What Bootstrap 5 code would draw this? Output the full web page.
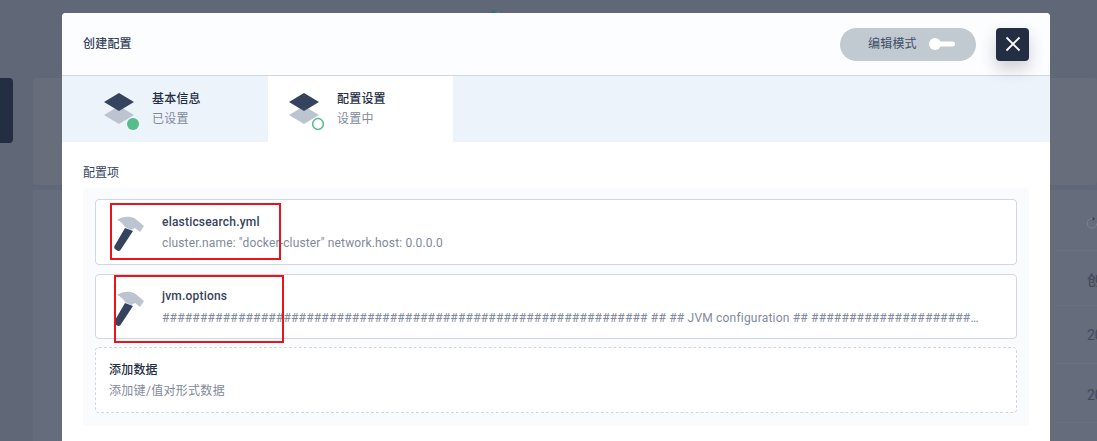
<!DOCTYPE html>
<html lang="zh">
<head>
<meta charset="utf-8">
<title>创建配置</title>
<link href="https://cdn.jsdelivr.net/npm/bootstrap@5.3.0/dist/css/bootstrap.min.css" rel="stylesheet">
<style>
html,body{height:441px;overflow:hidden;}
body{background:#606878;font-family:Roboto,"Noto Sans CJK SC",sans-serif;color:#36435c;position:relative;}
.pg-tab{width:13px;height:65px;background:#242e42;border-radius:0 4px 4px 0;margin-top:78px;flex:none;}
.pg-panel{position:absolute;left:33px;top:78px;width:1064px;height:107px;background:#676d7b;border-radius:4px;}
.pg-table{position:absolute;left:33px;top:190px;width:1064px;height:251px;background:#656c7b;}
.pg-reload{position:absolute;left:1086px;top:217px;}
.pg-text{position:absolute;left:1087px;color:#434b5a;font-size:14px;line-height:20px;white-space:nowrap;}
.pg-line{position:absolute;left:1056px;right:0;height:1px;background:#6a7282;}
.pg-logo{position:absolute;left:489px;top:9px;}
.dlg{position:absolute;left:62px;top:13px;width:988px;height:440px;background:#fff;border-radius:4px 4px 0 0;}
.dlg-head{height:63px;padding:0 21px;background:#fcfdff;border-bottom:1px solid #d1d7df;border-radius:4px 4px 0 0;}
.dlg-title{font-size:12px;font-weight:500;color:#36435c;letter-spacing:.2px;}
.mode-pill{width:136px;height:33px;background:#c1c9d1;border-radius:17px;font-size:12px;color:#404e68;padding-left:28px;gap:12px;letter-spacing:.2px;}
.mode-knob{width:26px;height:12px;flex:none;}
.close-box{width:33px;height:33px;background:#242e42;border-radius:4px;box-shadow:0 8px 16px rgba(36,46,66,.22);margin-left:20px;margin-right:0;}
.step-bar{height:66px;background:#edf3fb;}
.step-item{width:206px;height:66px;padding-left:41px;gap:13px;}
.step-item-on{width:185px;background:#fff;padding-left:20px;}
.step-icon{width:36px;height:42px;flex:none;}
.step-name{font-size:12px;font-weight:500;line-height:18px;color:#242e42;letter-spacing:.2px;}
.step-state{font-size:12px;line-height:18px;color:#7f8a9c;margin-top:2px;letter-spacing:.2px;}
.dlg-body{padding:23px 21px 0;}
.sect-label{font-size:12px;line-height:17px;color:#36435c;margin-bottom:6px;}
.sect-box{width:946px;background:#f9fbfd;padding:11px 12px 12px;height:238px;border-radius:4px;}
.cfg-row{height:66px;background:#fff;border:1px solid #d1d7df;border-radius:4px;margin-bottom:9px;padding-left:13px;}
.cfg-row-2{height:65px;margin-bottom:8px;}
.cfg-ico{width:40px;height:40px;flex:none;margin-right:13px;}
.cfg-text{min-width:0;width:823px;}
.cfg-name{font-size:12px;font-weight:500;line-height:18px;color:#36435c;letter-spacing:.2px;padding-top:1px;}
.cfg-desc{font-size:12px;line-height:18px;color:#7f8a9c;margin-top:3px;white-space:nowrap;overflow:hidden;text-overflow:ellipsis;letter-spacing:.15px;}
.cfg-row-2 .cfg-name{padding-top:0;}
.cfg-row-2 .cfg-desc{margin-top:4px;letter-spacing:.2px;}
.add-row{height:66px;background:#fff;border:1px dashed #d1d7df;border-radius:4px;padding-left:13px;}
.add-name{font-size:12px;font-weight:500;line-height:18px;color:#242e42;letter-spacing:.2px;}
.add-desc{font-size:12px;line-height:18px;color:#7f8a9c;margin-top:3px;letter-spacing:.3px;}
.mark-box{position:absolute;border:2px solid #e8151f;pointer-events:none;}
.mark-a{left:48px;top:190px;width:171px;height:57px;}
.mark-b{left:52px;top:262px;width:170px;height:68px;}
</style>
</head>
<body>
<div class="d-flex"><div class="pg-tab"></div></div>
<div class="pg-panel"></div>
<div class="pg-table"></div>
<svg class="pg-logo" width="14" height="5" viewBox="0 0 14 5" aria-hidden="true"><path d="M1 5C2 2 4 1 6 1V5Z" fill="#2f7468"/><path d="M8 2c2 0 3 1 4 3H8Z" fill="#4a7f88"/></svg>
<svg class="pg-reload" width="12" height="12" viewBox="0 0 12 12" aria-hidden="true"><path d="M7 1.6A4.8 4.8 0 1 0 10.8 6.4" fill="none" stroke="#7c8494"/><path d="M6.6 0v3.6l2.4-1.8Z" fill="#343d4e"/></svg>
<div class="pg-text fw-medium" style="top:270px">创建</div>
<div class="pg-text" style="top:325px">2021</div>
<div class="pg-text" style="top:385px">2021</div>
<div class="pg-line" style="top:250px"></div>
<div class="pg-line" style="top:305px"></div>
<div class="pg-line" style="top:363px"></div>
<div class="pg-line" style="top:422px"></div>

<div class="dlg">
  <div class="dlg-head d-flex align-items-center justify-content-between">
    <div class="dlg-title">创建配置</div>
    <div class="d-flex align-items-center">
      <div class="mode-pill d-flex align-items-center">
        <span>编辑模式</span>
        <svg class="mode-knob" viewBox="0 0 26 12" aria-hidden="true"><circle cx="6" cy="6" r="6" fill="#fff"/><rect x="6" y="3.5" width="20" height="5" rx="2.5" fill="#fff"/></svg>
      </div>
      <div class="close-box d-flex align-items-center justify-content-center">
        <svg width="16" height="16" viewBox="0 0 16 16" aria-hidden="true"><path d="M1.5 1.5 14.5 14.5M14.5 1.5 1.5 14.5" stroke="#fff" stroke-width="1.8"/></svg>
      </div>
    </div>
  </div>
  <div class="step-bar d-flex">
    <div class="step-item d-flex align-items-center">
      <svg class="step-icon" viewBox="0 0 36 42" aria-hidden="true"><path d="M1 27 16 18 31 27 16 36Z" fill="#bcc5cf"/><path d="M1 14 16 5 31 14 16 23Z" fill="#36435c"/><circle cx="30" cy="36" r="6" fill="#55bc8a"/></svg>
      <div><div class="step-name">基本信息</div><div class="step-state">已设置</div></div>
    </div>
    <div class="step-item step-item-on d-flex align-items-center">
      <svg class="step-icon" viewBox="0 0 36 42" aria-hidden="true"><path d="M1 27 16 18 31 27 16 36Z" fill="#bcc5cf"/><path d="M1 14 16 5 31 14 16 23Z" fill="#36435c"/><circle cx="30" cy="36" r="5.4" fill="#fff" stroke="#55bc8a" stroke-width="1.5"/></svg>
      <div><div class="step-name">配置设置</div><div class="step-state">设置中</div></div>
    </div>
  </div>
  <div class="dlg-body">
    <div class="sect-label">配置项</div>
    <div class="sect-box">
      <div class="cfg-row d-flex align-items-center">
        <svg class="cfg-ico" viewBox="0 0 40 40" aria-hidden="true"><path d="M8 8C14 4 21 4 26 6.500L35 14 31 20 26 16 22 18 16 15C14 12 12 9.500 8 8Z" fill="#bcc5cf"/><path d="M16 16 24 19 11.500 38C10.500 39.500 9 39 8 38.500L6 37C5 36 5 35 5.500 34Z" fill="#36435c"/></svg>
        <div class="cfg-text"><div class="cfg-name">elasticsearch.yml</div><div class="cfg-desc">cluster.name: "docker-cluster" network.host: 0.0.0.0</div></div>
      </div>
      <div class="cfg-row cfg-row-2 d-flex align-items-center">
        <svg class="cfg-ico" viewBox="0 0 40 40" aria-hidden="true"><path d="M8 8C14 4 21 4 26 6.500L35 14 31 20 26 16 22 18 16 15C14 12 12 9.500 8 8Z" fill="#bcc5cf"/><path d="M16 16 24 19 11.500 38C10.500 39.500 9 39 8 38.500L6 37C5 36 5 35 5.500 34Z" fill="#36435c"/></svg>
        <div class="cfg-text"><div class="cfg-name">jvm.options</div><div class="cfg-desc">################################################################ ## ## JVM configuration ## ################################################################ ## ## WARNING</div></div>
      </div>
      <div class="add-row d-flex flex-column justify-content-center">
        <div class="add-name">添加数据</div>
        <div class="add-desc">添加键/值对形式数据</div>
      </div>
    </div>
  </div>
  <div class="mark-box mark-a"></div>
  <div class="mark-box mark-b"></div>
</div>
</body>
</html>
